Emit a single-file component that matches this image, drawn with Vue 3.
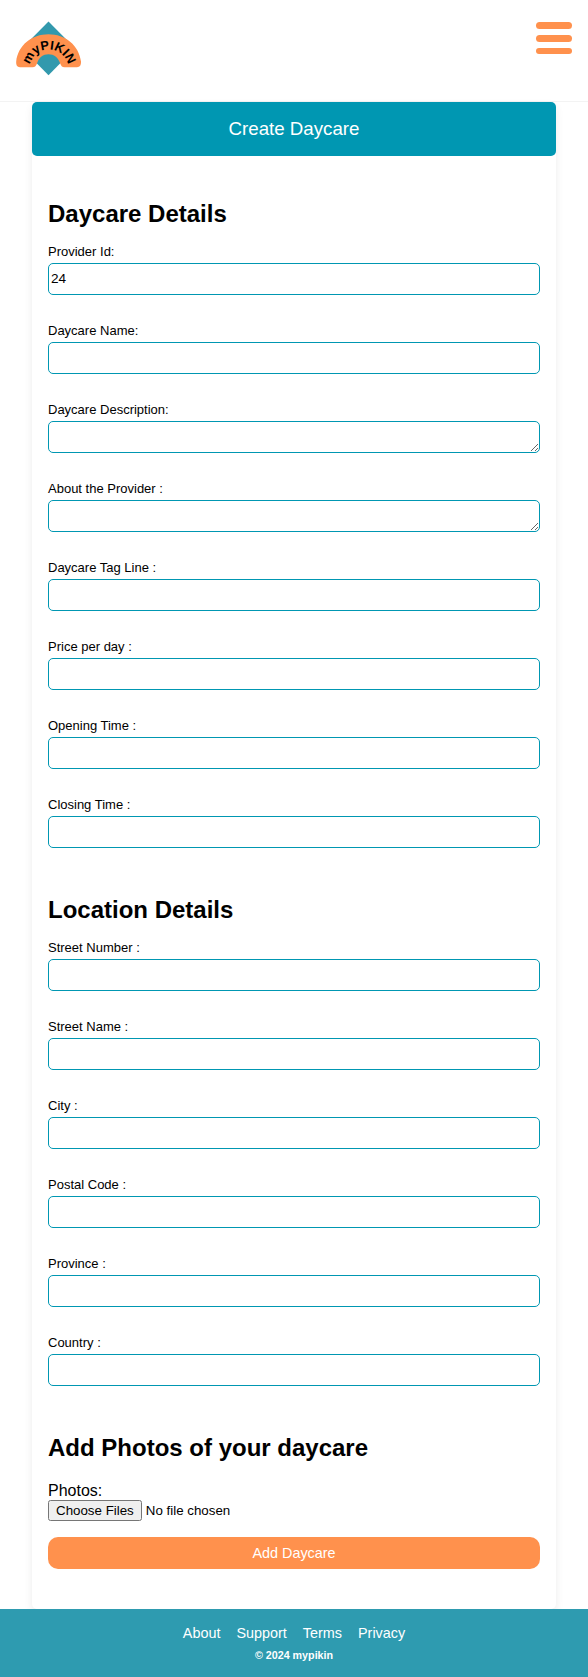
<script setup>
import { ref } from 'vue'

const sections = ref([
  {
    title: 'Daycare Details',
    fields: [
      { id: 'provider', label: 'Provider Id:', value: '24' },
      { id: 'name', label: 'Daycare Name:', value: '' },
      { id: 'description', label: 'Daycare Description:', value: '', multiline: true },
      { id: 'about', label: 'About the Provider :', value: '', multiline: true },
      { id: 'tagline', label: 'Daycare Tag Line :', value: '' },
      { id: 'price', label: 'Price per day :', value: '' },
      { id: 'opening', label: 'Opening Time :', value: '' },
      { id: 'closing', label: 'Closing Time :', value: '' }
    ]
  },
  {
    title: 'Location Details',
    fields: [
      { id: 'street-number', label: 'Street Number :', value: '' },
      { id: 'street-name', label: 'Street Name :', value: '' },
      { id: 'city', label: 'City :', value: '' },
      { id: 'postal', label: 'Postal Code :', value: '' },
      { id: 'province', label: 'Province :', value: '' },
      { id: 'country', label: 'Country :', value: '' }
    ]
  }
])

const links = ['About', 'Support', 'Terms', 'Privacy']
</script>

<template>
  <div class="page">
    <header class="header">
      <svg class="logo" width="66" height="56" viewBox="16 21 66 56" role="img" aria-label="myPIKIN">
        <path d="M48.5 21.5 L75 48.3 L48.5 75.3 L22 48.3 Z" fill="#3299ad" />
        <path
          d="M20 67.2 C17 67.2 16 65 16.2 61.500 C18 45 32 34.200 48.500 34.200 C65 34.200 79 45 81 61.500 C81.200 65 80 67.200 77 67.200 H64.500 C62 67.200 61 65.800 60 63 C58 57.500 54 54.200 48.500 54.200 C43 54.200 39 57.500 37.200 63 C36.200 65.800 35 67.200 32.500 67.200 Z"
          fill="#ff914d"
        />
        <path id="logo-arc" d="M29.500 69 A19.500 19.500 0 0 1 68.500 69" fill="none" />
        <text class="logo-text" text-anchor="middle"><textPath href="#logo-arc" startOffset="50%">myPIKIN</textPath></text>
      </svg>
      <button class="menu" type="button" aria-label="Menu">
        <span class="bar"></span>
        <span class="bar"></span>
        <span class="bar bar-last"></span>
      </button>
    </header>

    <main class="card">
      <h3 class="banner">Create Daycare</h3>
      <form class="form" @submit.prevent>
        <section v-for="section in sections" :key="section.title" class="section">
          <h2 class="title">{{ section.title }}</h2>
          <div v-for="field in section.fields" :key="field.id" class="field">
            <label class="label" :for="field.id">{{ field.label }}</label>
            <textarea v-if="field.multiline" :id="field.id" v-model="field.value" class="input"></textarea>
            <input v-else :id="field.id" v-model="field.value" class="input" type="text" />
          </div>
        </section>
        <section class="section">
          <h2 class="title">Add Photos of your daycare</h2>
          <label class="photos-label" for="photos">Photos:</label>
          <input id="photos" class="file" type="file" multiple />
        </section>
        <button class="submit" type="submit">Add Daycare</button>
      </form>
    </main>

    <footer class="footer">
      <nav class="links">
        <a v-for="link in links" :key="link" class="link">{{ link }}</a>
      </nav>
      <h6 class="copyright">© 2024 mypikin</h6>
    </footer>
  </div>
</template>

<style>
body {
  margin: 0;
  background: #fff;
}
</style>

<style scoped>
.page {
  display: flex;
  flex-direction: column;
  height: 1677px;
  overflow: hidden;
  font-family: "Liberation Sans", Arial, sans-serif;
  color: #000;
  background: #fff;
}
.page * {
  box-sizing: border-box;
}
.header {
  display: flex;
  justify-content: space-between;
  align-items: flex-start;
  flex: none;
  height: 102px;
  padding: 21px 16px 0;
  border-bottom: 1px solid #f3f3f3;
}
.logo {
  display: block;
}
.logo-text {
  font-size: 12.8px;
  font-weight: bold;
  fill: #000;
}
.menu {
  display: flex;
  flex-direction: column;
  gap: 6px;
  width: 36px;
  margin-top: 1px;
  padding: 0;
  border: 0;
  background: none;
}
.bar {
  width: 36px;
  height: 7px;
  border-radius: 4px;
  background: #ff914d;
}
.bar-last {
  height: 6px;
}
.card {
  flex: none;
  height: 1507px;
  margin: 0 32px;
  border-radius: 5px;
  background: #fff;
  box-shadow: 0 4px 8px rgba(0, 0, 0, 0.08);
}
.banner {
  height: 54px;
  margin: 0;
  border-radius: 5px;
  background: #0097b2;
  color: #fff;
  font-size: 18.72px;
  font-weight: normal;
  line-height: 53px;
  text-align: center;
}
.form {
  padding: 44px 16px 0;
}
.section + .section {
  margin-top: 48px;
}
.title {
  margin: 0 0 17px;
  font-size: 24px;
  line-height: 27px;
}
.field + .field {
  margin-top: 28px;
}
.label {
  display: block;
  height: 15px;
  margin-bottom: 4px;
  font-size: 13px;
  line-height: 15px;
}
.input {
  display: block;
  width: 100%;
  height: 32px;
  padding: 0 2px 2px;
  border: 1px solid #0097b2;
  border-radius: 5px;
  background: #fff;
  color: #000;
  font-family: inherit;
  font-size: 13.6px;
}
.photos-label {
  display: block;
  height: 18px;
  margin-top: 21px;
  font-size: 16px;
  line-height: 18px;
}
.file {
  display: block;
  height: 21px;
  margin: 0;
  font-family: inherit;
  font-size: 13.333px;
}
.submit {
  display: block;
  width: 100%;
  height: 32px;
  margin-top: 16px;
  padding: 0;
  border: 0;
  border-radius: 10px;
  background: #ff914d;
  color: #fff;
  font-family: inherit;
  font-size: 14.4px;
  line-height: 32px;
}
.footer {
  position: relative;
  display: flex;
  flex-direction: column;
  align-items: center;
  flex: none;
  height: 68px;
  padding-top: 16px;
  background: #2e9bb0;
  color: #fff;
}
.links {
  display: flex;
  gap: 16px;
}
.link {
  font-size: 14.4px;
  line-height: 16px;
}
.copyright {
  margin: 8px 0 0;
  font-size: 10.72px;
  line-height: 12px;
}
</style>
